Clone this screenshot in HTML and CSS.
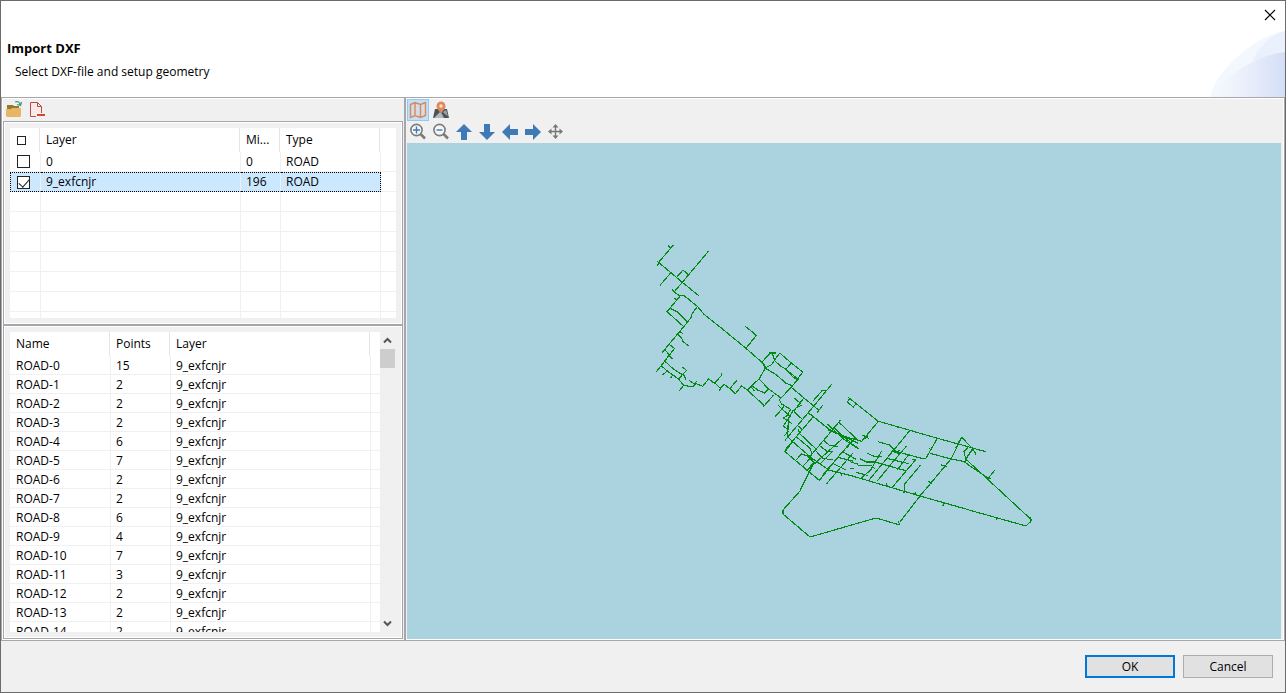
FILE: index.html
```html
<!DOCTYPE html>
<html lang="en">
<head>
<meta charset="utf-8">
<title>Import DXF</title>
<link rel="stylesheet" href="styles.css">
</head>
<body>
<main class="dialog">
  <header class="banner">
    <svg class="swoosh" viewBox="0 0 75 66" preserveAspectRatio="none" aria-hidden="true">
      <defs><linearGradient id="sky"><stop offset="0" stop-color="#f6f9ff"/><stop offset=".5" stop-color="#e9effb"/><stop offset="1" stop-color="#d3def6"/></linearGradient></defs>
      <path d="M0 66C6 38 48 3 75 0V66Z" fill="#f3f7fe"/>
      <path d="M42 30C50 14 62 3 75 0V30Z" fill="#ebf1fc"/>
      <path d="M0 66C14 48 42 25 75 21V66Z" fill="url(#sky)"/>
    </svg>
    <button class="close" aria-label="Close"><svg width="12" height="12" viewBox="0 0 12 12"><path d="M1 1L11 11M11 1L1 11" stroke="#000" stroke-width="1.2" fill="none"/></svg></button>
    <h1>Import DXF</h1>
    <p>Select DXF-file and setup geometry</p>
  </header>

  <div class="workspace">
    <section class="side">
      <div class="toolbar">
        <button class="tool" aria-label="Open file"><svg width="18" height="18" viewBox="0 0 18 18"><path d="M2 6V4H8L9 5H14V8H2Z" fill="#98772f"/><path d="M1 8H6L7 7H16V15L15 16H2L1 15Z" fill="#e7b566"/><path d="M10 1C13 0 15 1 15 4M12 3.500L15.500 4.500L16.500 1" fill="none" stroke="#459b7c" stroke-width="1.300"/></svg></button>
        <button class="tool" aria-label="Remove file"><svg width="18" height="18" viewBox="0 0 18 18"><path d="M3 2H9V6H13V12H8V15H3Z" fill="#fbe9e8"/><path d="M8 15.500H2.500V1.500H9.500L13.500 5.500V12M9.500 1.500V5.500H13.500" fill="none" stroke="#bd4a4b"/><path d="M9 13H17V15H9Z" fill="#d2492a"/></svg></button>
      </div>
      <div class="pane">
        <div class="view layers-view">
          <table class="grid layers">
            <colgroup><col class="c-check"><col class="c-layer"><col class="c-min"><col class="c-type"><col></colgroup>
            <thead><tr><th><span class="mini"></span></th><th>Layer</th><th>Mi...</th><th>Type</th><th></th></tr></thead>
            <tbody>
              <tr><td><input type="checkbox" aria-label="Layer 0"></td><td>0</td><td>0</td><td>ROAD</td><td></td></tr>
              <tr class="selected"><td><input type="checkbox" checked aria-label="Layer 9_exfcnjr"></td><td>9_exfcnjr</td><td>196</td><td>ROAD</td><td></td></tr>
              <tr><td></td><td></td><td></td><td></td><td></td></tr>
              <tr><td></td><td></td><td></td><td></td><td></td></tr>
              <tr><td></td><td></td><td></td><td></td><td></td></tr>
              <tr><td></td><td></td><td></td><td></td><td></td></tr>
              <tr><td></td><td></td><td></td><td></td><td></td></tr>
              <tr><td></td><td></td><td></td><td></td><td></td></tr>
              <tr><td></td><td></td><td></td><td></td><td></td></tr>
            </tbody>
          </table>
        </div>
      </div>
      <div class="pane pane-grow">
        <div class="view roads-view">
          <div class="clip">
          <table class="grid roads">
            <colgroup><col class="c-name"><col class="c-points"><col class="c-layer"><col></colgroup>
            <thead><tr><th>Name</th><th>Points</th><th>Layer</th><th></th></tr></thead>
            <tbody>
              <tr><td>ROAD-0</td><td>15</td><td>9_exfcnjr</td><td></td></tr>
              <tr><td>ROAD-1</td><td>2</td><td>9_exfcnjr</td><td></td></tr>
              <tr><td>ROAD-2</td><td>2</td><td>9_exfcnjr</td><td></td></tr>
              <tr><td>ROAD-3</td><td>2</td><td>9_exfcnjr</td><td></td></tr>
              <tr><td>ROAD-4</td><td>6</td><td>9_exfcnjr</td><td></td></tr>
              <tr><td>ROAD-5</td><td>7</td><td>9_exfcnjr</td><td></td></tr>
              <tr><td>ROAD-6</td><td>2</td><td>9_exfcnjr</td><td></td></tr>
              <tr><td>ROAD-7</td><td>2</td><td>9_exfcnjr</td><td></td></tr>
              <tr><td>ROAD-8</td><td>6</td><td>9_exfcnjr</td><td></td></tr>
              <tr><td>ROAD-9</td><td>4</td><td>9_exfcnjr</td><td></td></tr>
              <tr><td>ROAD-10</td><td>7</td><td>9_exfcnjr</td><td></td></tr>
              <tr><td>ROAD-11</td><td>3</td><td>9_exfcnjr</td><td></td></tr>
              <tr><td>ROAD-12</td><td>2</td><td>9_exfcnjr</td><td></td></tr>
              <tr><td>ROAD-13</td><td>2</td><td>9_exfcnjr</td><td></td></tr>
              <tr><td>ROAD-14</td><td>2</td><td>9_exfcnjr</td><td></td></tr>
            </tbody>
          </table>
          </div>
          <div class="scrollbar">
            <button aria-label="Scroll up"><svg width="9" height="7" viewBox="0 0 9 7"><path d="M1 5.500L4.500 2L8 5.500" fill="none" stroke="#555" stroke-width="2"/></svg></button>
            <div class="thumb"></div>
            <button aria-label="Scroll down"><svg width="9" height="7" viewBox="0 0 9 7"><path d="M1 1.500L4.500 5L8 1.500" fill="none" stroke="#555" stroke-width="2"/></svg></button>
          </div>
        </div>
      </div>
    </section>

    <section class="preview">
      <div class="maptools">
        <button class="tool active" aria-label="Map"><svg width="18" height="18" viewBox="0 0 18 18"><path d="M1.500 3.500L6 1.500L11.500 3.500L16.500 1.500V14.500L11.500 16.500L6 14.500L1.500 16.500ZM6 1.500V14.500M11.500 3.500V16.500" fill="#d6dde2" stroke="#d08b64" stroke-width="1.400"/></svg></button>
        <button class="tool" aria-label="Map with marker"><svg width="18" height="18" viewBox="0 0 18 18"><path d="M3 8H15L17 17H1Z" fill="#4c5358"/><path d="M2 17L8 11L10 13L12 17Z" fill="#aeb8bf"/><path d="M11 11L14 9L16 15L13 13Z" fill="#9ba5ac"/><path d="M9 13C7 9 4.500 8 4.500 5A4.500 4.500 0 0 1 13.500 5C13.500 8 11 9 9 13Z" fill="#dd8a58"/><circle cx="9" cy="5" r="1.700" fill="#f3e4da"/></svg></button>
      </div>
      <div class="maptools">
        <button class="tool" aria-label="Zoom in"><svg width="18" height="18" viewBox="0 0 18 18"><circle cx="7.500" cy="7" r="5.600" fill="#f5f7f8" stroke="#7b7b79" stroke-width="1.600"/><path d="M11.500 11L16 15.500" stroke="#7b7b79" stroke-width="2.600"/><path d="M4 7H11M7.500 3.500V10.500" stroke="#3e7ab5" stroke-width="1.400"/></svg></button>
        <button class="tool" aria-label="Zoom out"><svg width="18" height="18" viewBox="0 0 18 18"><circle cx="7.500" cy="7" r="5.600" fill="#f5f7f8" stroke="#7b7b79" stroke-width="1.600"/><path d="M11.500 11L16 15.500" stroke="#7b7b79" stroke-width="2.600"/><path d="M4.500 7H10.500" stroke="#3e7ab5" stroke-width="1.400"/></svg></button>
        <button class="tool" aria-label="Pan up"><svg width="18" height="18" viewBox="0 0 18 18"><path d="M9 1L17 9H12V17H6V9H1Z" fill="#3e7ab5"/></svg></button>
        <button class="tool" aria-label="Pan down"><svg width="18" height="18" viewBox="0 0 18 18"><path d="M9 17L17 9H12V1H6V9H1Z" fill="#3e7ab5"/></svg></button>
        <button class="tool" aria-label="Pan left"><svg width="18" height="18" viewBox="0 0 18 18"><path d="M1 9L9 1V6H17V12H9V17Z" fill="#3e7ab5"/></svg></button>
        <button class="tool" aria-label="Pan right"><svg width="18" height="18" viewBox="0 0 18 18"><path d="M17 9L9 1V6H1V12H9V17Z" fill="#3e7ab5"/></svg></button>
        <button class="tool" aria-label="Pan"><svg width="18" height="18" viewBox="0 0 18 18"><path d="M8.500 3V14M3 8.500H14" stroke="#777" stroke-width="1.400"/><path d="M8.500 1L11.500 4.500H5.500ZM8.500 16L11.500 12.500H5.500ZM1 8.500L4.500 5.500V11.500ZM16 8.500L12.500 5.500V11.500Z" fill="#777"/></svg></button>
      </div>
      <svg class="map" viewBox="407 143 874 496" role="img" aria-label="Road geometry preview">
        <g fill="none" stroke="#008a14" stroke-width="3.400">
          <g transform="translate(640 235) scale(.3333)">
            <path d="M55 83L97 34M85 32L92 40M101 31L93 37M51 78L57 85L52 92M57 83L127 142L176 182M91 115L60 151M205 49L127 142L102 171M109 128L129 105L146 120M96 163L104 172L121 184M102 190L112 195"/>
            <path d="M131 275L81 230L122 181H131L172 214L192 238L240 276L318 340L366 382L378 396M318 340L349 301L316 274M366 382L391 352M172 214L155 239V246L131 275L66 353M91 220L112 231L142 260M114 298L128 314V319L146 333M119 288L128 296"/>
            <path d="M88 328L103 340L88 362L98 372M74 343L88 360L49 411M73 377L100 402L118 414L130 420M64 392L78 405L115 432L131 451L156 456L169 446L188 454L206 432L224 444L241 459L252 448L270 461L286 476L305 453L322 465M131 451L118 468M115 432L142 404M127 397L139 404M130 418L138 434M84 406L68 420M99 420L91 429M146 436L166 448L169 438M224 444L244 422V415M243 459L237 468M270 461L292 434M218 441L228 447"/>
          </g>
          <g transform="translate(730 320) scale(.3333)">
            <path d="M97 125L121 99H137M119 97L128 104L134 120M149 99L134 120L125 134L107 143L87 177L52 210M96 127L107 145M149 99L184 129L218 156L201 180L184 202M184 129L168 148M134 122L150 137L168 148L190 172L205 180M168 148L203 177M107 145L140 165L168 190L187 197L205 178M87 177L116 207L152 233M65 197L83 210L104 219L116 207M67 192L65 202L74 214M52 210L103 257L130 226M98 262L103 257"/>
            <path d="M184 202L148 239L155 252L182 268L170 288L160 294L185 310M184 202L222 234L268 272M222 234L192 272L195 280M192 234L212 250M278 256L260 280M215 256L200 262M250 242L277 211L288 213M306 192L234 279L165 361M145 256L180 290L160 318L175 330M134 292L162 260M192 275L218 299M234 279L250 290L165 390M190 270L172 302M205 318L217 330M163 347L175 334"/>
          </g>
          <g transform="translate(770 380) scale(.3333)">
            <path d="M130 110L180 150L225 170L275 184L325 124L235 52M241 54L232 66L250 81L259 70M115 98L130 110M55 117L53 170L68 185L125 234L176 270L240 286M68 185L45 215L148 301L220 212M85 148L90 162L120 190L140 209M77 169L120 205L126 220"/>
            <path d="M212 120L118 232M206 126L265 182L277 184M172 132L222 178L268 208M176 150L240 178L265 190M190 142L250 195L262 202M175 146L190 156M230 205L255 172M278 165L298 176M294 166L283 178M222 172L110 272M132 247L91 330M78 240L95 222L112 228L132 247L110 272M98 260L118 238H128"/>
            <path d="M160 180L178 196L205 200M148 196L172 215L190 215M135 210L158 235L190 240M240 190L160 283M250 218L170 311M218 215L258 238M204 232L248 243M188 250L228 270M190 212L150 252M213 280L215 288"/>
          </g>
          <g transform="translate(850 400) scale(.3333)">
            <path d="M0 226L210 288L358 330M86 64L180 91L262 115L325 132L407 155M180 91L120 164M262 115L227 176L215 175L130 152M143 78L141 85M240 160L303 177L340 184L415 235L434 211M415 235L423 235M346 176L545 360M335 112L303 177L210 288L150 366M335 112L369 147L378 163M357 138L342 155L347 176L369 147M345 184L366 148M323 130L327 125M316 141L320 145M274 195L290 200M235 243L245 250M237 145L244 150"/>
            <path d="M83 125L118 135L133 150L145 163M170 138L125 190L82 243M52 160L70 168L97 170M110 175L176 191M30 176L50 186L75 186L170 213M95 153L62 210L32 236M135 145L56 242M198 178L127 262M175 165L142 210M185 178L197 178M211 196L164 252L162 280M25 197L65 197L75 207M18 217L55 227M0 185L25 193M0 205L12 207M109 250L112 260M196 276L194 284M281 308L279 318M122 153L149 160M147 150L146 168"/>
          </g>
        </g>
        <path d="M969 510L1026 526L1032 520M801 490L783 510V514L810 537L876 518L900 525M997 517L996 520M1030 517L1031 523M898 521L900 525" fill="none" stroke="#008a14" stroke-width="1.133"/>
      </svg>
    </section>
  </div>

  <footer class="actions">
    <button class="btn primary">OK</button>
    <button class="btn">Cancel</button>
  </footer>
</main>
</body>
</html>
```
FILE: styles.css
```css
* { box-sizing: border-box; }
body {
  margin: 0;
  padding-right: 2px;
  background: #fff;
  color: #000;
  font: 12px/16px "Open Sans", "Noto Sans", sans-serif;
}
button { padding: 0; border: 0; background: none; font: inherit; color: inherit; }
svg { display: block; }

.dialog {
  display: flex;
  flex-direction: column;
  height: 100vh;
  border: 1px solid #6b6b6b;
  background: #f0f0f0;
}

.banner { position: relative; height: 96px; padding: 39px 6px 0; background: #fff; }
.banner h1 { margin: 0 0 8px; font-size: 13px; line-height: 16px; }
.banner p { margin: 0 8px; }
.swoosh { position: absolute; right: 0; bottom: 0; width: 75px; height: 66px; }
.close { position: absolute; top: 8px; right: 9px; }

.workspace {
  flex: 1;
  display: flex;
  min-height: 0;
  border: 1px solid #a7a6aa;
  box-shadow: inset 0 0 0 1px #fff;
}
.side { flex: none; width: 402px; display: flex; flex-direction: column; padding: 1px; }
.toolbar { display: flex; gap: 5px; height: 22px; padding: 2px; }
.tool { width: 18px; height: 18px; }

.pane { border: 1px solid #a7a6aa; box-shadow: inset 0 0 0 1px #fff; padding: 6px; }
.pane-grow { flex: 1; min-height: 0; }
.view { background: #fff; overflow: hidden; }
.layers-view { height: 190px; }
.roads-view { display: flex; height: 100%; }
.clip { flex: 1; overflow: hidden; }

.grid { width: 100%; table-layout: fixed; border-collapse: separate; border-spacing: 0; }
.grid th {
  height: 24px;
  padding: 0 0 0 5px;
  text-align: left;
  font-weight: normal;
  background: linear-gradient(#e5e5e5, #e5e5e5) right 1px top / 1px 100% no-repeat;
}
.grid th:last-child { background: none; }
.grid td {
  height: 20px;
  padding: 0 0 0 5px;
  border-right: 1px solid #f0f0f0;
  border-bottom: 1px solid #f0f0f0;
  white-space: nowrap;
}
.grid td:last-child { border-right: 0; }
.roads td { height: 19px; padding-top: 2px; }
.grid th:first-child, .roads td:first-child { padding-left: 6px; }
.c-check { width: 31px; }
.c-layer { width: 200px; }
.c-min { width: 40px; }
.c-type { width: 100px; }
.c-name { width: 101px; }
.c-points { width: 60px; }

.layers td:first-child { padding-left: 7px; }
.selected td { background: #cce8ff; border-top: 1px dotted #000; border-bottom: 1px dotted #000; }
.selected td:first-child { border-left: 1px dotted #000; padding-left: 6px; }
.selected td:nth-child(4) { border-right: 1px dotted #000; }
.selected td:last-child { background: #fff; border-top: 0; border-bottom: 1px solid #f0f0f0; }
.mini { display: block; width: 9px; height: 9px; margin-left: 1px; border: 1px solid #222; }
input[type="checkbox"] {
  appearance: none;
  display: block;
  width: 13px;
  height: 13px;
  margin: 0;
  border: 1px solid #222;
  background: #fff;
}
input[type="checkbox"]:checked::after {
  content: "";
  display: block;
  width: 5px;
  height: 9px;
  margin: 0 0 0 3px;
  border: solid #222;
  border-width: 0 1px 1px 0;
  transform: rotate(42deg);
}

.scrollbar { flex: none; width: 16px; display: flex; flex-direction: column; background: #f0f0f0; }
.scrollbar button { height: 17px; width: 15px; display: grid; place-items: center; }
.scrollbar button:last-child { margin-top: auto; }
.thumb { width: 15px; height: 19px; background: #cdcdcd; }

.preview {
  flex: 1;
  min-width: 0;
  display: flex;
  flex-direction: column;
  border-left: 2px solid #a7a6aa;
  padding: 1px 3px 1px 1px;
}
.maptools { display: flex; gap: 1px; height: 22px; }
.maptools .tool { width: 22px; height: 22px; display: grid; place-items: center; }
.maptools .active { background: #c5dff5; border: 1px solid #90c8f6; }
.map { flex: 1; min-height: 0; width: 100%; background: #aad3df; shape-rendering: crispEdges; }

.actions { display: flex; justify-content: flex-end; gap: 8px; padding: 14px 12px; }
.btn { width: 90px; height: 23px; border: 1px solid #adadad; background: #e1e1e1; }
.primary { border: 2px solid #0078d7; }
```
